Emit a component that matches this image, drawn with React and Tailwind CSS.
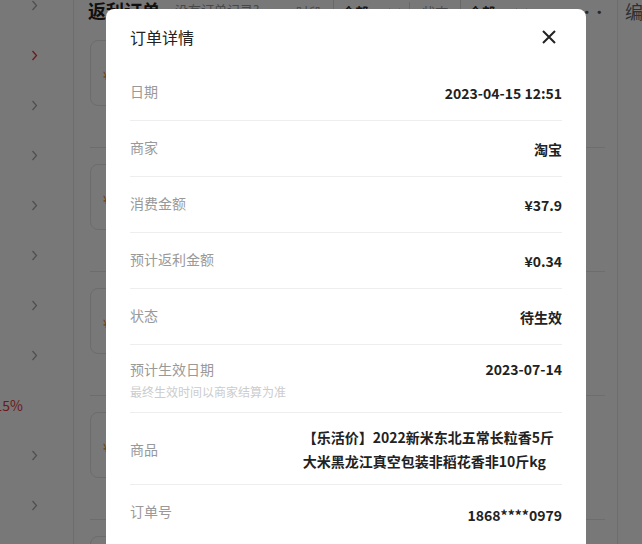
import React from 'react'

const font = { fontFamily: '"Noto Sans CJK SC", "Noto Sans", sans-serif' }

const Chevron = ({ className }) => (
  <svg width="7" height="11" viewBox="0 0 7 11" className={className}>
    <polyline points="1.5,1 5.5,5.5 1.5,10" fill="none" stroke="currentColor" strokeWidth="1.3" />
  </svg>
)

const Down = () => (
  <svg width="13" height="8" viewBox="0 0 13 8" className="text-[#666]">
    <polyline points="1,1 6.5,6.5 12,1" fill="none" stroke="currentColor" strokeWidth="1.3" />
  </svg>
)

const rows = [
  { label: '日期', value: '2023-04-15 12:51' },
  { label: '商家', value: '淘宝' },
  { label: '消费金额', value: '¥37.9' },
  { label: '预计返利金额', value: '¥0.34' },
  { label: '状态', value: '待生效' },
]

const App = () => {
  const side = Array.from({ length: 12 })
  const items = Array.from({ length: 5 })

  return (
    <div className="relative h-[544px] w-[642px] overflow-hidden bg-white" style={font}>
      {/* page behind the dialog */}
      <div className="flex h-full">
        <div className="w-[74px] shrink-0 overflow-hidden border-r border-[#e8e8e8]">
          <div className="-mt-5">
            {side.map((_, i) => (
              <div key={i} className="flex h-[50px] items-center justify-end pr-[35px]">
                {i === 8 && <span className="mr-[15px] whitespace-nowrap text-sm text-[#e4393c]">15%</span>}
                <Chevron className={i === 1 ? 'text-[#e4393c]' : 'text-[#aaa]'} />
              </div>
            ))}
          </div>
        </div>

        <div className="flex min-w-0 flex-1 flex-col">
          <div className="flex h-[39px] items-start whitespace-nowrap pl-[14px] pr-3">
            <span className="text-lg font-bold leading-5 text-[#222]">返利订单</span>
            <span className="ml-[15px] text-[13px] leading-5 text-[#999]">没有订单记录?</span>
            <div className="ml-auto flex items-center text-[13px] leading-5">
              <span className="pr-2 text-[#999]">时段:</span>
              <div className="flex h-6 items-center gap-5 border-l border-[#ddd] pl-2 pr-2">
                <span className="font-bold text-[#333]">全部</span>
                <Down />
              </div>
              <span className="border-l border-[#ddd] pl-3 pr-2 text-[#999]">状态:</span>
              <div className="flex h-6 items-center gap-5 border-l border-[#ddd] pl-2 pr-2">
                <span className="font-bold text-[#333]">全部</span>
                <Down />
              </div>
              <span className="ml-8 font-bold tracking-tighter text-[#555]">···</span>
            </div>
          </div>

          <div className="pl-4 pr-3">
            {items.map((_, i) => (
              <div key={i} className="border-b border-[#e8e8e8] pt-4 pb-[41px]">
                <div className="mr-[40px] h-[66px] rounded-lg border border-[#e5e5e5] px-3 pt-5">
                  <span className="text-xs text-[#f08a24]">¥</span>
                </div>
              </div>
            ))}
          </div>
        </div>

        <div className="w-[25px] shrink-0 border-l border-[#e8e8e8] pl-[7px]">
          <span className="text-lg leading-5 text-[#666]">编</span>
        </div>
      </div>

      {/* mask */}
      <div className="absolute inset-0 bg-black/[0.53]" />

      {/* dialog */}
      <div className="absolute left-[106px] top-[9px] w-[480px] rounded-lg bg-white px-6 pb-10">
        <div className="flex h-[56px] items-center justify-between">
          <h2 className="text-base text-[#222]">订单详情</h2>
          <svg width="16" height="16" viewBox="0 0 16 16" className="mr-[5px] text-[#222]">
            <path d="M2 2 L14 14 M14 2 L2 14" stroke="currentColor" strokeWidth="2" />
          </svg>
        </div>

        {rows.map((r) => (
          <div key={r.label} className="flex h-14 items-start justify-between border-b border-[#eee] text-sm">
            <span className="pt-4 leading-5 text-[#999]">{r.label}</span>
            <span className="pt-[18px] font-bold leading-5 text-[#222]">{r.value}</span>
          </div>
        ))}

        <div className="flex h-[68px] items-start justify-between border-b border-[#eee] text-sm">
          <div className="pt-[15px]">
            <div className="leading-[18px] text-[#999]">预计生效日期</div>
            <div className="mt-[6px] text-xs leading-4 text-[#ccc]">最终生效时间以商家结算为准</div>
          </div>
          <span className="pt-[15px] font-bold leading-[18px] text-[#222]">2023-07-14</span>
        </div>

        <div className="flex h-[72px] items-center justify-between border-b border-[#eee] text-sm">
          <span className="text-[#999]">商品</span>
          <p className="max-w-[60%] font-bold leading-6 text-[#222]">【乐活价】2022新米东北五常长粒香5斤大米黑龙江真空包装非稻花香非10斤kg</p>
        </div>

        <div className="flex h-14 items-start justify-between text-sm">
          <span className="pt-4 leading-5 text-[#999]">订单号</span>
          <span className="pt-[20px] font-bold leading-5 text-[#222]">1868****0979</span>
        </div>
      </div>
    </div>
  )
}

export default App
